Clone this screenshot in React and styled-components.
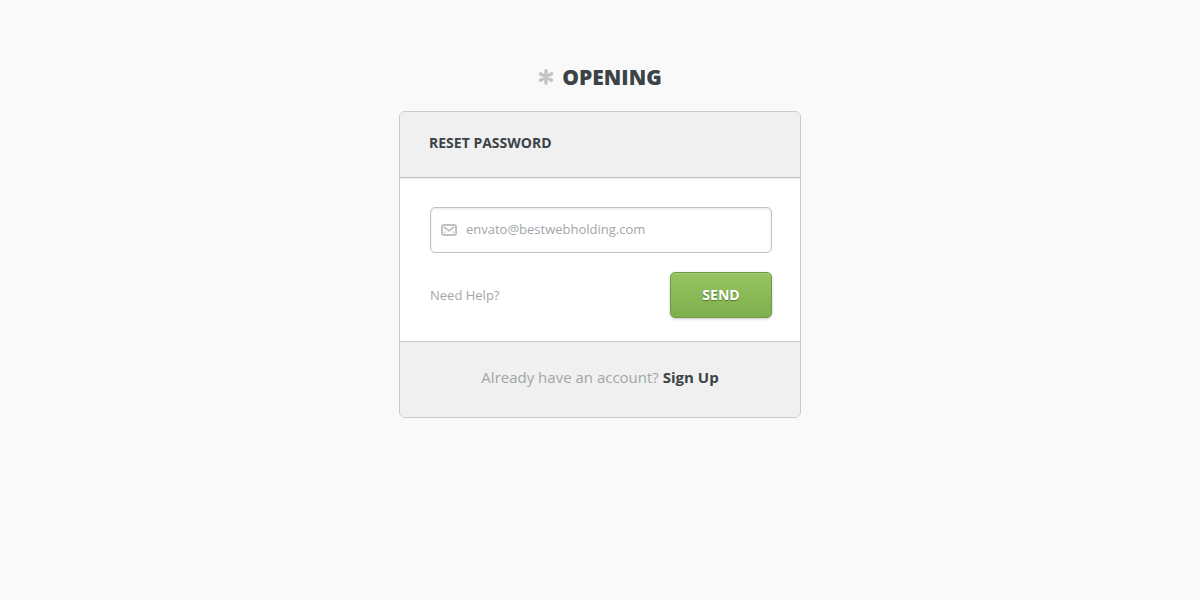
import React from 'react';
import styled, { createGlobalStyle } from 'styled-components';

const GlobalStyle = createGlobalStyle`
  *, *::before, *::after { box-sizing: border-box; }
  body {
    margin: 0;
    background: #f9f9f9;
    color: #3b4346;
    font-family: 'Open Sans', 'Noto Sans', sans-serif;
  }
`;

const Page = styled.main`
  display: flex;
  flex-direction: column;
  align-items: center;
  gap: 19px;
  min-height: 100vh;
  padding: 62px 16px;
`;

const Brand = styled.h1`
  display: flex;
  align-items: center;
  gap: 8px;
  margin: 0;
  font-size: 21px;
  font-weight: 800;
  line-height: 30px;
`;

const Card = styled.form`
  width: 100%;
  max-width: 402px;
  overflow: hidden;
  background: #fff;
  border: 1px solid #c9cacb;
  border-radius: 6px;
`;

const CardHeader = styled.header`
  padding: 20px 29px 23px;
  background: #f0f0f0;
  border-bottom: 1px solid #c4c5c6;
  box-shadow: 0 1px 1px #ececec;
`;

const Title = styled.h2`
  margin: 0;
  font-size: 14px;
  font-weight: 700;
  line-height: 22px;
`;

const CardBody = styled.div`
  display: flex;
  flex-direction: column;
  gap: 19px;
  padding: 29px 28px 23px 30px;
`;

const Field = styled.label`
  display: flex;
  align-items: center;
  gap: 9px;
  height: 46px;
  padding: 0 10px;
  border: 1px solid #c1c2c3;
  border-radius: 5px;
  box-shadow: inset 0 1px 3px rgba(0, 0, 0, 0.1);
`;

const EmailInput = styled.input`
  flex: 1;
  min-width: 0;
  height: 42px;
  padding: 0 0 2px;
  border: 0;
  outline: 0;
  background: transparent;
  color: #a2a6a9;
  font: 13px 'Open Sans', 'Noto Sans', sans-serif;

  &::placeholder { color: #a2a6a9; opacity: 1; }
`;

const Actions = styled.div`
  display: flex;
  align-items: center;
  justify-content: space-between;
`;

const HelpLink = styled.a`
  color: #a2a6a9;
  font-size: 13px;
  line-height: 20px;
  text-decoration: none;
`;

const SendButton = styled.button`
  width: 102px;
  height: 46px;
  padding: 0 0 2px;
  border: 1px solid #6c9a43;
  border-radius: 5px;
  background: linear-gradient(#97c362, #7eb04e);
  box-shadow: inset 0 1px 0 #a4cc74, 0 1px 3px rgba(0, 0, 0, 0.22);
  color: #fff;
  font: 700 14px 'Open Sans', 'Noto Sans', sans-serif;
  text-shadow: 0 1px 1px rgba(0, 0, 0, 0.4);
  cursor: pointer;
`;

const CardFooter = styled.footer`
  padding: 24px 16px 28px;
  background: #f0f0f0;
  border-top: 1px solid #c4c5c6;
  color: #a2a6a9;
  font-size: 15px;
  line-height: 23px;
  text-align: center;
`;

const SignUpLink = styled.a`
  color: #3b4346;
  font-weight: 700;
  text-decoration: none;
`;

function AsteriskIcon() {
  return (
    <svg width="16" height="16" viewBox="0 0 16 16" fill="none" stroke="#c3c4c4" strokeWidth="3.4" strokeLinecap="round" aria-hidden="true">
      <path d="M8 1.8V14.2M2.4 4.8L13.6 11.2M13.6 4.8L2.4 11.2" />
    </svg>
  );
}

function MailIcon() {
  return (
    <svg width="16" height="12" viewBox="0 0 16 12" fill="none" stroke="#c0c1c2" strokeLinejoin="round" aria-hidden="true">
      <rect x="1" y="1" width="14" height="10" rx="2" strokeWidth="2" />
      <path d="M3 3L8 6.8L13 3" strokeWidth="1.8" />
      <path d="M3 9.2L5 7.4M13 9.2L11 7.4" strokeWidth="1" />
    </svg>
  );
}

export default function App() {
  return (
    <>
      <GlobalStyle />
      <Page>
        <Brand><AsteriskIcon />OPENING</Brand>
        <Card onSubmit={(event) => event.preventDefault()}>
          <CardHeader><Title>RESET PASSWORD</Title></CardHeader>
          <CardBody>
            <Field htmlFor="email">
              <MailIcon />
              <EmailInput id="email" type="email" aria-label="Email address" placeholder="envato@bestwebholding.com" />
            </Field>
            <Actions>
              <HelpLink href="#help">Need Help?</HelpLink>
              <SendButton type="submit">SEND</SendButton>
            </Actions>
          </CardBody>
          <CardFooter>
            Already have an account? <SignUpLink href="#signup">Sign Up</SignUpLink>
          </CardFooter>
        </Card>
      </Page>
    </>
  );
}
